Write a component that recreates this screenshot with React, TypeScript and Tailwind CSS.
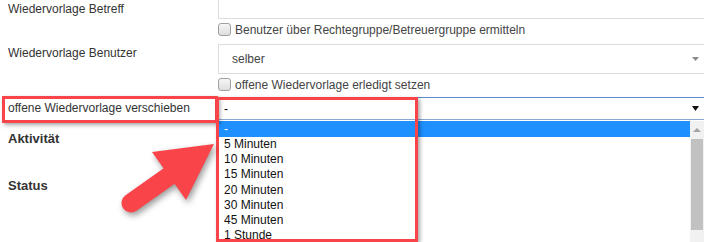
import React from "react";

const options = ["-", "5 Minuten", "10 Minuten", "15 Minuten", "20 Minuten", "30 Minuten", "45 Minuten", "1 Stunde", "2 Stunden"];

function Checkbox() {
  return <span className="block w-[13px] h-[13px] rounded-[3px] border border-[#a0a0a0] bg-gradient-to-b from-[#f6f6f6] to-[#dedede] shrink-0" />;
}

export default function App() {
  return (
    <div className="relative w-[704px] h-[242px] overflow-hidden bg-white font-['Liberation_Sans',Arial,sans-serif] text-[12px] text-[#333]">
      {/* Row 1 */}
      <div className="flex h-[19px]">
        <div className="w-[218px] pl-2 leading-[18px]">Wiedervorlage Betreff</div>
        <div className="flex-1 border-l border-b border-[#dcdcdc]" />
      </div>
      {/* checkbox 1 */}
      <div className="flex h-[25px] pl-[218px] pt-[4px]">
        <div className="flex items-center h-[13px] gap-[4px] text-[#444]">
          <Checkbox />
          <span>Benutzer über Rechtegruppe/Betreuergruppe ermitteln</span>
        </div>
      </div>
      {/* select selber */}
      <div className="flex h-[30px]">
        <div className="w-[218px] pl-2 leading-[18px]">Wiedervorlage Benutzer</div>
        <div className="flex-1 flex items-center justify-between border-l border-y border-[#dcdcdc] pl-[13px] pr-[5px] text-[#444]">
          <span>selber</span>
          <svg width="7" height="4" viewBox="0 0 7 4"><polygon points="0,0 7,0 3.5,4" fill="#8a8a8a" /></svg>
        </div>
      </div>
      {/* checkbox 2 */}
      <div className="flex h-[23px] pl-[218px] pt-[4px]">
        <div className="flex items-center h-[13px] gap-[4px] text-[#444]">
          <Checkbox />
          <span>offene Wiedervorlage erledigt setzen</span>
        </div>
      </div>
      {/* select 3 */}
      <div className="flex h-[23px]">
        <div className="w-[218px] pl-2 pt-[2px] leading-[18px]">offene Wiedervorlage verschieben</div>
        <div className="relative flex-1">
          <div className="h-[23px] flex items-center justify-between border-t border-t-[#5f88c6] border-b border-b-[#8ea8d6] pl-[6px] pr-[5px] text-black">
            <span>-</span>
            <svg width="7" height="5" viewBox="0 0 7 5"><polygon points="0,0 7,0 3.5,5" fill="#111" /></svg>
          </div>
          {/* dropdown menu */}
          <div className="absolute left-0 right-0 top-full h-[130px] bg-white pt-[1px] flex">
            <div className="flex-1 flex flex-col">
              {options.map((o, i) => (
                <div
                  key={o}
                  className={
                    i === 0
                      ? "h-[16px] leading-[16px] pl-[6px] bg-[#1e90ff] text-white"
                      : "h-[15.2px] leading-[15.2px] pl-[6px] text-[#111] shrink-0"
                  }
                >
                  {o}
                </div>
              ))}
            </div>
            <div className="w-[14px] flex flex-col bg-[#f1f1f1]">
              <div className="h-[18px] flex items-center justify-center">
                <svg width="8" height="4" viewBox="0 0 8 4"><polygon points="0,4 8,4 4,0" fill="#a3a3a3" /></svg>
              </div>
              <div className="mx-[1px] h-[91px] bg-[#c1c1c1]" />
            </div>
          </div>
        </div>
      </div>
      {/* lower labels */}
      <div className="w-[218px] pl-2 pt-[10px] text-[13px] font-bold leading-[18px]">Aktivität</div>
      <div className="w-[218px] pl-2 pt-[29px] text-[13px] font-bold leading-[18px]">Status</div>

      {/* annotations */}
      <div className="absolute left-[2px] top-[96px] w-[216px] h-[27px] border-[3px] border-[#f9454a] shadow-[2px_2px_4px_rgba(0,0,0,0.35)]" />
      <div className="absolute left-[216px] top-[97px] w-[202px] h-[145px] border-[3px] border-[#f9454a] shadow-[2px_2px_4px_rgba(0,0,0,0.35)]" />
      <svg
        className="absolute left-0 top-0 drop-shadow-[2px_3px_3px_rgba(0,0,0,0.4)]"
        width="704"
        height="242"
        viewBox="0 0 704 242"
      >
        <line x1="131" y1="203" x2="172" y2="174" stroke="#f9454a" strokeWidth="19" strokeLinecap="round" />
        <polygon points="214,144 152,152 186,200" fill="#f9454a" />
      </svg>
    </div>
  );
}
